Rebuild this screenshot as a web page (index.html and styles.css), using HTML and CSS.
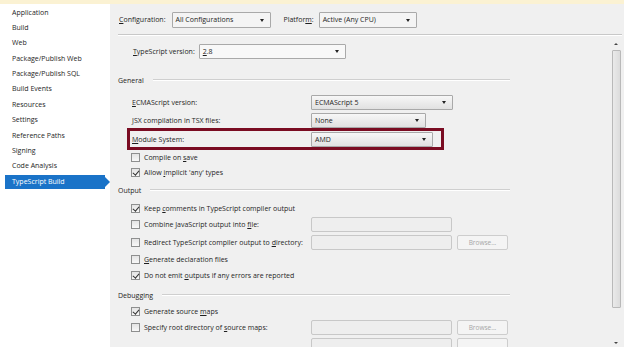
FILE: index.html
```html
<!DOCTYPE html>
<html>
<head>
<meta charset="utf-8">
<link rel="stylesheet" href="styles.css">
</head>
<body>
<div class="strip"></div>
<div class="main">
  <nav class="side">
    <div class="item">Application</div>
    <div class="item">Build</div>
    <div class="item">Web</div>
    <div class="item">Package/Publish Web</div>
    <div class="item">Package/Publish SQL</div>
    <div class="item">Build Events</div>
    <div class="item">Resources</div>
    <div class="item">Settings</div>
    <div class="item">Reference Paths</div>
    <div class="item">Signing</div>
    <div class="item">Code Analysis</div>
    <div class="item sel">TypeScript Build</div>
  </nav>
  <section class="content">
    <div class="config">
      <span class="lbl"><u>C</u>onfiguration:</span>
      <div class="combo w-cfg">All Configurations<i class="arr"></i></div>
      <span class="lbl plat">Platfor<u>m</u>:</span>
      <div class="combo w-plat">Active (Any CPU)<i class="arr"></i></div>
    </div>
    <div class="hline"></div>
    <div class="scroller">
      <div class="page">
        <div class="row ts">
          <span class="tslbl"><u>T</u>ypeScript version:</span>
          <div class="combo w-ts"><u>2</u>.8<i class="arr"></i></div>
        </div>

        <div class="group g-general"><span>General</span><i class="gline"></i></div>
        <div class="row ind m6"><span class="label"><u>E</u>CMAScript version:</span><div class="combo grad w-ecma">ECMAScript 5<i class="arr"></i></div></div>
        <div class="row ind m2"><span class="label"><u>J</u>SX compilation in TSX files:</span><div class="combo grad w-jsx">None<i class="arr"></i></div></div>
        <div class="row mark"><span class="label"><u>M</u>odule System:</span><div class="combo grad w-mod">AMD<i class="arr"></i></div></div>
        <div class="row cb-row h14"><i class="cb"></i><span>Compile on <u>s</u>ave</span></div>
        <div class="row cb-row"><i class="cb on"></i><span>Allow <u>i</u>mplicit 'any' types</span></div>

        <div class="group m2"><span>Output</span><i class="gline"></i></div>
        <div class="row cb-row m2"><i class="cb on"></i><span>Keep <u>c</u>omments in TypeScript compiler output</span></div>
        <div class="row cb-row"><i class="cb"></i><span class="label2">Combine JavaScript output into <u>f</u>ile:</span><div class="tbox"></div></div>
        <div class="row cb-row m2"><i class="cb"></i><span class="label2">Redirect TypeScript compiler output to <u>d</u>irectory:</span><div class="tbox"></div><div class="btn">Browse...</div></div>
        <div class="row cb-row m1"><i class="cb"></i><span><u>G</u>enerate declaration files</span></div>
        <div class="row cb-row"><i class="cb on"></i><span>Do not emit <u>o</u>utputs if any errors are reported</span></div>

        <div class="group m4"><span>Debugging</span><i class="gline"></i></div>
        <div class="row cb-row"><i class="cb on"></i><span>Generate source <u>m</u>aps</span></div>
        <div class="row cb-row"><i class="cb"></i><span class="label2">Specify root directory of <u>s</u>ource maps:</span><div class="tbox"></div><div class="btn">Browse...</div></div>
        <div class="row cb-row m2"><span class="label3"></span><div class="tbox"></div><div class="btn"></div></div>
      </div>
      <div class="sbar">
        <div class="sarrow up"></div>
        <div class="thumb"></div>
        <div class="sarrow down"></div>
      </div>
    </div>
  </section>
</div>
</body>
</html>
```
FILE: styles.css
```css
* { box-sizing: border-box; }
html, body { margin: 0; padding: 0; }
body {
  width: 624px; height: 347px; overflow: hidden;
  font-family: "Open Sans", "Noto Sans", sans-serif;
  font-size: 7px;
  color: #1e1e1e;
  background: #f0f0f0;
}
u { text-decoration: underline; text-underline-offset: 1px; }
.strip { height: 4px; background: #fbf2d3; }
.main { display: flex; height: 343px; }

.side { width: 110px; background: #fff; padding-top: 0.5px; flex: none; }
.item { height: 15.4px; line-height: 15.4px; padding-left: 12px; position: relative; }
.item.sel {
  margin-left: 5px; margin-right: 5px; padding-left: 7px;
  background: #1a73c8; color: #fff; height: 14px; line-height: 14px; margin-top: 1px;
}
.item.sel::after {
  content: ""; position: absolute; right: -5px; top: 2px;
  border-left: 5px solid #1a73c8; border-top: 5px solid transparent; border-bottom: 5px solid transparent;
}

.content { flex: 1; display: flex; flex-direction: column; min-width: 0; }
.config { display: flex; align-items: center; height: 30px; padding-left: 9px; padding-top: 1px; }
.lbl { margin-right: 6px; }
.plat { margin-left: 13px; margin-right: 5px; }
.hline { background: #c8c8c8; margin-left: 8px; margin-right: 2px; border-bottom: 1px solid #fff; height: 2px; }

.combo {
  position: relative; height: 16px; line-height: 14px;
  border: 1px solid #a9a9a9; border-radius: 1px;
  background: #f4f4f4; padding-left: 3px; flex: none;
}
.combo.grad { background: linear-gradient(#f7f7f7, #e1e1e1); height: 15px; line-height: 13px; }
.arr {
  position: absolute; right: 6px; top: 50%; margin-top: -1px;
  border-top: 3px solid #222; border-left: 2.5px solid transparent; border-right: 2.5px solid transparent;
}
.w-cfg { width: 99px; }
.w-plat { width: 98px; }
.w-ts { width: 147px; height: 15px; line-height: 13px; background: #f8f8f8; }
.w-ecma { width: 142px; }
.w-jsx { width: 115px; }
.w-mod { width: 122px; }

.scroller { flex: 1; display: flex; min-height: 0; }
.page { flex: 1; padding-left: 8px; padding-top: 7px; }
.row { display: flex; align-items: center; height: 16px; }
.ts { padding-left: 15px; }
.tslbl { margin-right: 4px; }
.ind { padding-left: 14px; }
.label { width: 179px; flex: none; }
.label2 { width: 167px; flex: none; }
.label3 { width: 180px; flex: none; }
.m1 { margin-top: 1px; }
.m2 { margin-top: 2px; }
.m4 { margin-top: 4px; }
.m6 { margin-top: 6px; }
.h14 { height: 14px; }

.group { display: flex; align-items: center; height: 16px; }
.g-general { margin-top: 13px; }
.gline { flex: none; height: 2px; width: 0; flex-grow: 1; margin-left: 9px; margin-right: 100px; border-top: 1px solid #cfcfcf; border-bottom: 1px solid #fff; }

.mark {
  height: 22px; margin-left: 9px; width: 317px; padding-left: 2px;
  border: 3px solid #7a0c22;
}
.mark .label { width: 179px; }

.cb-row { padding-left: 13px; }
.cb {
  width: 9px; height: 9px; flex: none; margin-right: 4px;
  border: 1px solid #8e8f8f; background: linear-gradient(#e4e4e4, #f8f8f8);
  position: relative;
}
.cb.on::after {
  content: ""; position: absolute; left: 2.2px; top: 0px; width: 2.5px; height: 5px;
  border-right: 1.2px solid #333; border-bottom: 1.2px solid #333; transform: rotate(40deg);
}
.tbox {
  width: 141px; height: 15px; flex: none;
  border: 1px solid #c8c8c8; border-radius: 2px; background: #eeeeee;
}
.btn {
  width: 51px; height: 15px; flex: none; margin-left: 5px;
  border: 1px solid #cdcdcd; border-radius: 2px; background: #f4f4f4;
  color: #a6a6a6; text-align: center; line-height: 13px; font-size: 6.5px;
}

.sbar { width: 12px; flex: none; margin-right: 2px; margin-top: 4px; display: flex; flex-direction: column; align-items: center; }
.sarrow { height: 8px; width: 10px; position: relative; flex: none; }
.sarrow.up::after {
  content: ""; position: absolute; left: 3px; top: 3px;
  border-bottom: 2px solid #444; border-left: 2px solid transparent; border-right: 2px solid transparent;
}
.sarrow.down::after {
  content: ""; position: absolute; left: 3px; top: 3px;
  border-top: 2px solid #444; border-left: 2px solid transparent; border-right: 2px solid transparent;
}
.thumb {
  width: 9px; height: 258px; margin-top: 2px; margin-bottom: auto;
  border: 1px solid #b9b9b9; border-radius: 1px;
  background: linear-gradient(90deg, #eaeaea, #dcdcdc);
}
```
